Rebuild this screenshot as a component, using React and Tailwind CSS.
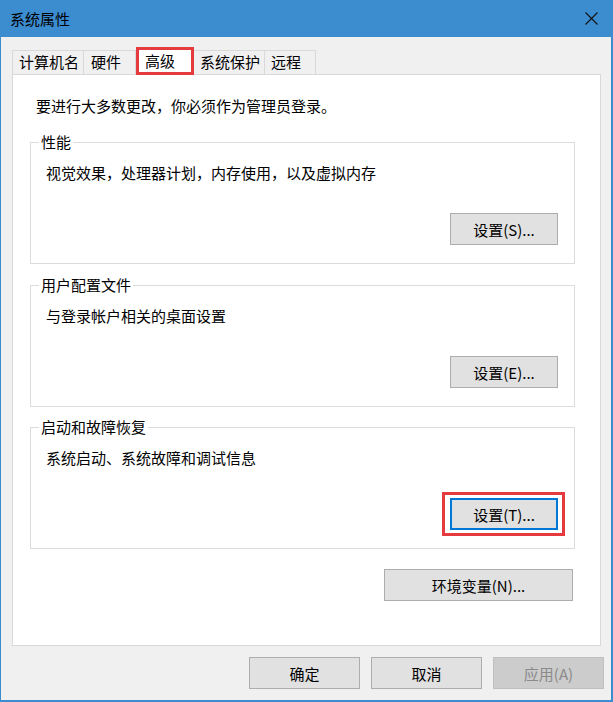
import React from 'react';

const tabs = [
  { label: '计算机名', w: 'w-[72px]', pl: 'pl-[6px]' },
  { label: '硬件', w: 'w-[53px]', pl: 'pl-[7px]' },
  { label: '高级', w: 'w-[58px]', pl: 'pl-[8px]', active: true },
  { label: '系统保护', w: 'w-[72px]', pl: 'pl-[6px]' },
  { label: '远程', w: 'w-[52px]', pl: 'pl-[6px]' },
];

const groups = [
  { title: '性能', desc: '视觉效果，处理器计划，内存使用，以及虚拟内存', btn: '设置(S)...', mt: 'mt-[26px]' },
  { title: '用户配置文件', desc: '与登录帐户相关的桌面设置', btn: '设置(E)...', mt: 'mt-[21px]' },
  { title: '启动和故障恢复', desc: '系统启动、系统故障和调试信息', btn: '设置(T)...', mt: 'mt-[20px]', focus: true },
];

function Tab({ tab, first }) {
  if (tab.active) {
    return (
      <div className={`relative z-10 h-[27px] -mb-px ${tab.w} ${tab.pl} pb-[1px] flex items-center bg-white border border-b-0 border-[#d9d9d9]`}>
        高级
        {/* red highlight */}
        <span className="absolute -left-px -right-px -top-[2px] bottom-0 border-[3px] border-[#e53b3f]" />
      </div>
    );
  }
  return (
    <div className={`h-[24px] ${tab.w} ${tab.pl} ${first ? '' : '-ml-px'} flex items-center border border-b-0 border-[#d9d9d9] bg-[#f0f0f0]`}>
      {tab.label}
    </div>
  );
}

function Group({ g }) {
  return (
    <div className={`relative w-[545px] h-[122px] border border-[#dcdcdc] ${g.mt}`}>
      <span className="absolute -top-[11px] left-[8px] px-[2px] bg-white leading-[20px]">{g.title}</span>
      <div className="pl-[15px] pt-[20px] leading-[20px]">{g.desc}</div>
      <div className="flex justify-end pr-[16px] mt-[30px]">
        {g.focus ? (
          <div className="relative">
            <button className="w-[108px] h-[32px] bg-[#e1e1e1] border-2 border-[#0078d7] leading-none">{g.btn}</button>
            <span className="absolute -left-[8px] -right-[7px] -top-[6px] -bottom-[6px] border-[3px] border-[#e53b3f]" />
          </div>
        ) : (
          <button className="w-[108px] h-[32px] bg-[#e1e1e1] border border-[#adadad] leading-none">{g.btn}</button>
        )}
      </div>
    </div>
  );
}

export default function App() {
  return (
    <div className="w-[613px] h-[702px] flex flex-col bg-[#f0f0f0] border-l border-r-2 border-b-2 border-[#3c8cd0] text-[15px] text-black font-['Noto_Sans_CJK_SC',sans-serif]">
      {/* Title bar */}
      <div className="h-[37px] shrink-0 bg-[#3c8cd0] flex items-center justify-between pl-[9px] pr-[13px]">
        <span className="leading-none -mt-[1px]">系统属性</span>
        <svg width="13" height="13" viewBox="0 0 13 13" className="-mt-[1px]">
          <path d="M0.5 0.5 L12.5 12.5 M12.5 0.5 L0.5 12.5" stroke="#111" strokeWidth="1.1" fill="none" />
        </svg>
      </div>

      {/* Tabs */}
      <div className="h-[26px] mt-[11px] pl-[11px] flex items-end">
        {tabs.map((t, i) => (
          <Tab key={t.label} tab={t} first={i === 0} />
        ))}
      </div>

      {/* Panel */}
      <div className="ml-[11px] w-[589px] h-[572px] bg-white border border-[#d9d9d9] pt-[21px] pl-[17px]">
        <div className="ml-[6px] leading-[20px]">要进行大多数更改，你必须作为管理员登录。</div>
        {groups.map((g) => (
          <Group key={g.title} g={g} />
        ))}
        <div className="w-[545px] flex justify-end pr-[2px] mt-[20px]">
          <button className="w-[189px] h-[32px] bg-[#e1e1e1] border border-[#adadad] leading-none">环境变量(N)...</button>
        </div>
      </div>

      {/* Bottom buttons */}
      <div className="flex justify-end gap-[11px] pr-[7px] mt-[11px]">
        <button className="w-[111px] h-[32px] bg-[#e1e1e1] border border-[#adadad] leading-none">确定</button>
        <button className="w-[111px] h-[32px] bg-[#e1e1e1] border border-[#adadad] leading-none">取消</button>
        <button className="w-[111px] h-[32px] bg-[#cccccc] border border-[#bfbfbf] text-[#8a8a8a] leading-none">应用(A)</button>
      </div>
    </div>
  );
}
